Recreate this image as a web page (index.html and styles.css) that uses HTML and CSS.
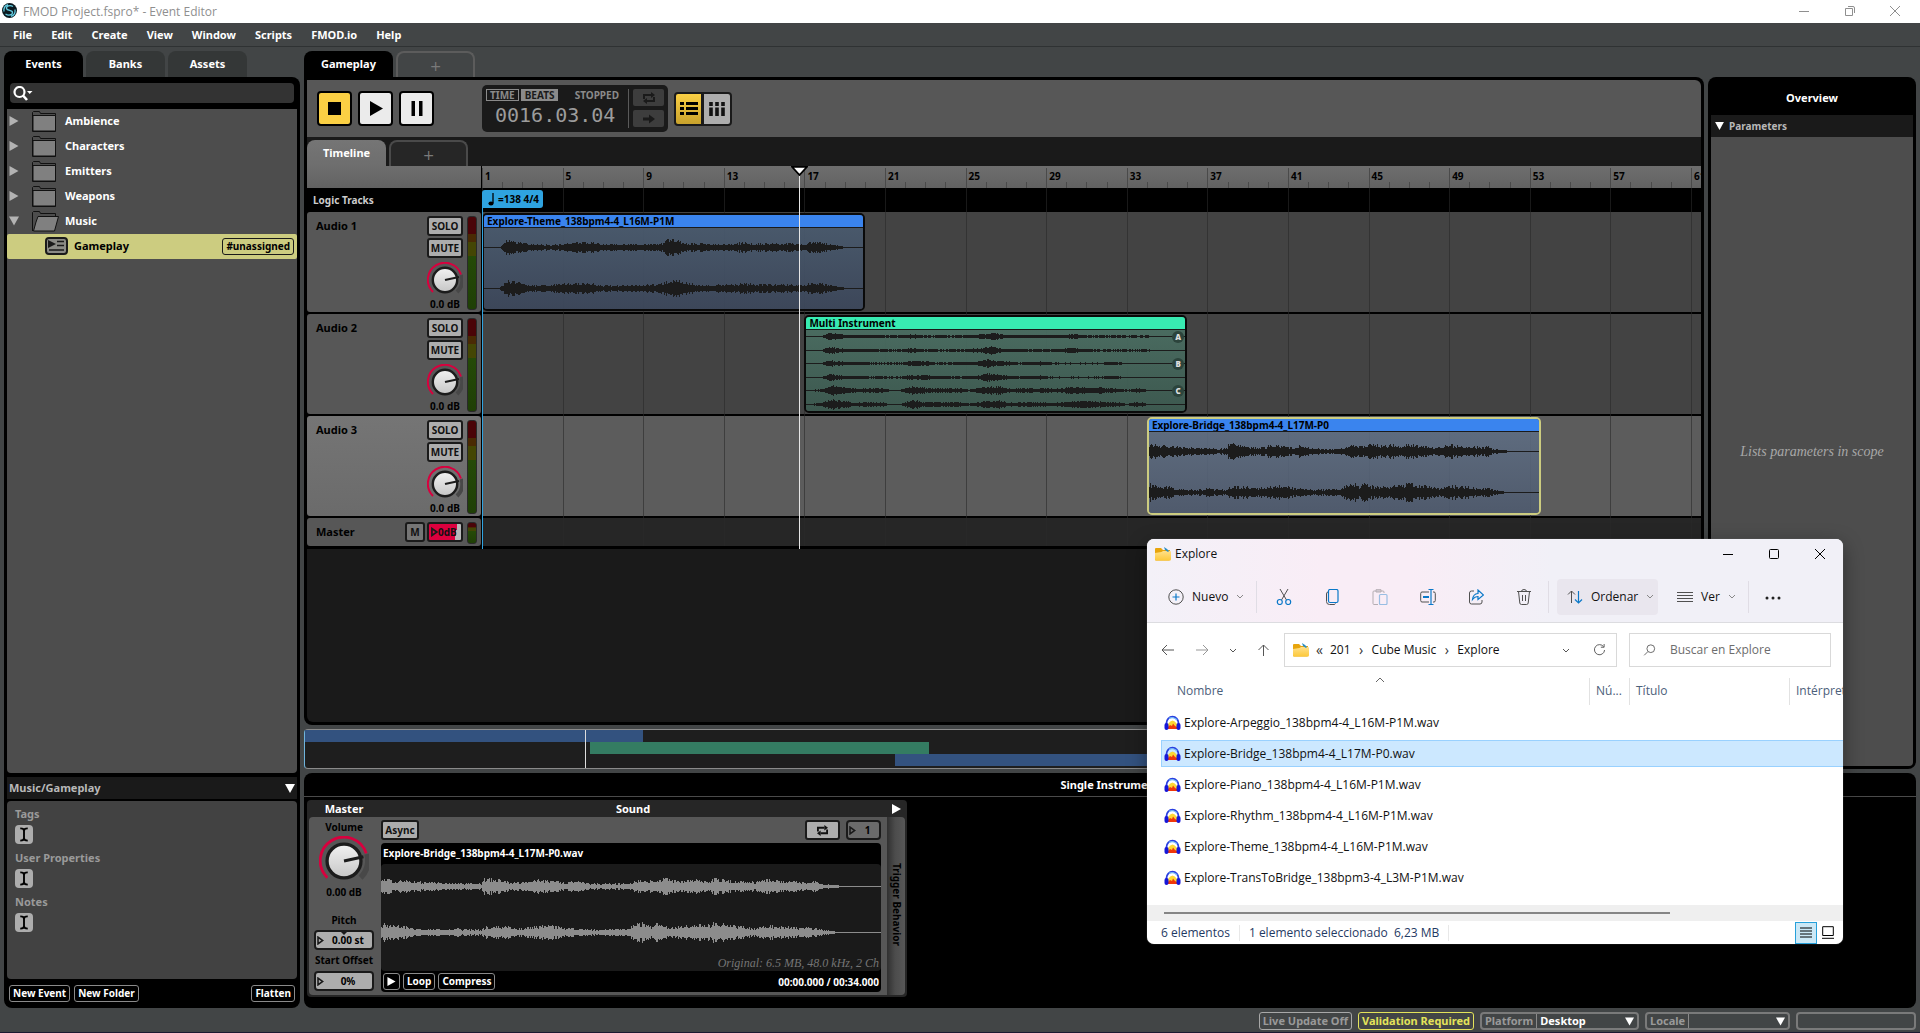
FILE: index.html
```html
<!DOCTYPE html>
<html lang="en" dir="ltr">
  <head>
    <meta charset="utf-8">
    <title>FMOD Project.fspro* - Event Editor</title>
    <link rel="stylesheet" href="styles.css">
  </head>

  <body>
    <!-- shared icons -->
    <svg class="defs" aria-hidden="true">
      <defs>
        <linearGradient id="knobFill" x1="0" y1="0" x2="0" y2="1">
          <stop offset="0" stop-color="#f2f2f2"/><stop offset="1" stop-color="#c6c6c6"/>
        </linearGradient>
        <linearGradient id="folderFill" x1="0" y1="0" x2="0" y2="1">
          <stop offset="0" stop-color="#ffe08a"/><stop offset="1" stop-color="#fdc93a"/>
        </linearGradient>
      </defs>
      <symbol id="knob" viewBox="-18 -18 36 36">
        <path d="M16.5-5A17 17 0 0 1 12 12" fill="none" stroke="#484848" stroke-width="4"/>
        <path d="M-12 12A17 17 0 1 1 16-5.5" fill="none" stroke="#d8003e" stroke-width="2"/>
        <circle r="12.2" fill="url(#knobFill)" stroke="#1c1c1c" stroke-width="2.4"/>
        <path d="M0 0L14-3" stroke="#1c1c1c" stroke-width="2.2"/>
      </symbol>
      <symbol id="folder" viewBox="0 0 24 21">
        <path d="M.5 20.5V1.5L1.5.5H7.5L8.5 2.5H23.5V20.5Z" fill="#4d4d4d" stroke="#111"/>
        <path d="M1 4.5H23.5V20H1Z" fill="#808080" stroke="#111"/>
      </symbol>
      <symbol id="folderOpen" viewBox="0 0 27 21">
        <path d="M.5 20V1.5L1.5.5H7.5L8.5 2.5H23.5V6" fill="#4d4d4d" stroke="#111"/>
        <path d="M6 5.5H26.5L22.5 20H1.5L4 11Z" fill="#808080" stroke="#111"/>
      </symbol>
      <symbol id="right" viewBox="0 0 9 10"><path d="M0 0L9 5L0 10Z" fill="currentColor"/></symbol>
      <symbol id="down" viewBox="0 0 10 9"><path d="M0 0H10L5 9Z" fill="currentColor"/></symbol>
      <symbol id="drag" viewBox="0 0 6 8"><path d="M.8 1V7L5 4Z" fill="none" stroke="#1a1a1a" stroke-width="1.4"/></symbol>
      <symbol id="loop" viewBox="0 0 14 12">
        <path d="M2 7V3H9M12 5V9H5" fill="none" stroke="currentColor" stroke-width="2"/>
        <path d="M9 0L13 3L9 6ZM5 6L1 9L5 12Z" fill="currentColor"/>
      </symbol>
      <symbol id="caret" viewBox="0 0 14 16"><path d="M3 1.5C5 1.5 7 2 7 4V12C7 14 5 14.500 3 14.500M11 1.5C9 1.500 7 2 7 4M7 12C7 14 9 14.500 11 14.500" fill="none" stroke="#000" stroke-width="2"/></symbol>
      <symbol id="winFolder" viewBox="0 0 16 14">
        <path d="M0 2Q0 1 1 1H6L8 3H15V12Q15 13.500 14 13.500H1Q0 13.500 0 12Z" fill="#e8a50c"/>
        <path d="M0 6L6.500 5L8 4H15Q16 4 16 5V12Q16 13.500 15 13.500H1Q0 13.500 0 12Z" fill="url(#folderFill)"/>
        <path d="M9 0L12 2L14 4L13 5L10 3Z" fill="#2a8ec4"/>
      </symbol>
      <symbol id="audacity" viewBox="0 0 17 17">
        <path d="M4 9Q8.500 2 13 9V14H4Z" fill="#fdd835"/>
        <path d="M4 12L6 10L8 11L9 8.500L11 11L13 12V14H4Z" fill="#f0370a"/>
        <path d="M2.500 10V8A6 6.300 0 0 1 14.500 8V10" fill="none" stroke="#2a3fe0" stroke-width="1.800"/>
        <path d="M5 3.300A6 5 0 0 1 13 5" fill="none" stroke="#6fb6f5" stroke-width="1.400"/>
        <rect x="0.500" y="8" width="4" height="7" rx="2" fill="#1616d8"/>
        <rect x="12.500" y="8" width="4" height="7" rx="2" fill="#1616d8"/>
      </symbol>
      <symbol id="chev" viewBox="0 0 8 5"><path d="M1 1L4 4L7 1" fill="none" stroke="currentColor"/></symbol>
    </svg>

    <header class="titlebar">
      <svg class="logo" viewBox="0 0 15 15"><circle cx="7.500" cy="7.500" r="7.500" fill="#0b1a20"/><path d="M11 3.500C8 1.500 4 3 4.500 5.500C5 8 10.500 7 10.500 9.500C10.500 12 6.500 13 3.500 11M2 8.500C1.500 5 3 2.500 6 1.600M13 6.500C13.500 10 12 12.500 9 13.400" fill="none" stroke="#63cbe0" stroke-width="1.300"/></svg>
      <span class="apptitle">FMOD Project.fspro* - Event Editor</span>
      <button class="winbtn" aria-label="Minimize"><svg viewBox="0 0 12 12"><path d="M1 6.500H11" /></svg></button>
      <button class="winbtn" aria-label="Restore"><svg viewBox="0 0 12 12"><path d="M1.500 3.500H8.500V10.500H1.500ZM4 1.500H9Q10.500 1.500 10.500 3V8"/></svg></button>
      <button class="winbtn" aria-label="Close"><svg viewBox="0 0 12 12"><path d="M1 1L11 11M11 1L1 11"/></svg></button>
    </header>

    <nav class="menubar">
      <a href="#">File</a><a href="#">Edit</a><a href="#">Create</a><a href="#">View</a><a href="#">Window</a><a href="#">Scripts</a><a href="#">FMOD.io</a><a href="#">Help</a>
    </nav>

    <main class="workspace">
      <section class="browser">
        <div class="tabs">
          <button class="tab active">Events</button>
          <button class="tab">Banks</button>
          <button class="tab">Assets</button>
        </div>
        <div class="browserpanel">
          <label class="search">
            <svg viewBox="0 0 20 15"><circle cx="6.500" cy="6" r="5" fill="none" stroke="#fff" stroke-width="2.200"/><path d="M10 9.500L14 14" stroke="#fff" stroke-width="2.600"/><path d="M14 5H19.500L16.700 8Z" fill="#fff"/></svg>
            <input type="text" aria-label="Search events">
          </label>
          <div class="tree">
            <div class="node"><svg class="arrow"><use href="#right"/></svg><svg class="folder"><use href="#folder"/></svg>Ambience</div>
            <div class="node"><svg class="arrow"><use href="#right"/></svg><svg class="folder"><use href="#folder"/></svg>Characters</div>
            <div class="node"><svg class="arrow"><use href="#right"/></svg><svg class="folder"><use href="#folder"/></svg>Emitters</div>
            <div class="node"><svg class="arrow"><use href="#right"/></svg><svg class="folder"><use href="#folder"/></svg>Weapons</div>
            <div class="node"><svg class="arrow"><use href="#down"/></svg><svg class="folder open"><use href="#folderOpen"/></svg>Music</div>
            <div class="node selected">
              <svg class="event" viewBox="0 0 23 18"><rect x="1" y="1" width="21" height="16" rx="3" fill="#8b8b86" stroke="#1a1a1a" stroke-width="2"/><path d="M3 3L11 7L3 11Z" fill="#1a1a1a"/><path d="M12 4.500H19M12 8.500H19M4 13H19" stroke="#1a1a1a" stroke-width="1.500"/></svg>
              Gameplay<span class="tag">#unassigned</span>
            </div>
          </div>
          <div class="pathbar"><span>Music/Gameplay</span><svg><use href="#down"/></svg></div>
          <div class="properties">
            <h3>Tags</h3>
            <button class="edit" aria-label="Edit tags"><svg><use href="#caret"/></svg></button>
            <h3>User Properties</h3>
            <button class="edit" aria-label="Edit user properties"><svg><use href="#caret"/></svg></button>
            <h3>Notes</h3>
            <button class="edit" aria-label="Edit notes"><svg><use href="#caret"/></svg></button>
          </div>
          <div class="browserbuttons">
            <button class="outline">New Event</button>
            <button class="outline">New Folder</button>
            <button class="outline last">Flatten</button>
          </div>
        </div>
      </section>

      <section class="right">
        <div class="upper">
          <div class="center">
            <div class="tabs">
              <button class="tab wide active">Gameplay</button>
              <button class="tab add">+</button>
            </div>
            <div class="editor">
              <div class="transport">
                <button class="play on" aria-label="Stop"><svg viewBox="0 0 31 31"><path d="M9 9H22V22H9Z"/></svg></button>
                <button class="play" aria-label="Play"><svg viewBox="0 0 31 31"><path d="M10 8L23 15.500L10 23Z"/></svg></button>
                <button class="play" aria-label="Pause"><svg viewBox="0 0 31 31"><path d="M10.500 8H14V23H10.500ZM18 8H21.500V23H18Z"/></svg></button>
                <div class="clock">
                  <div class="readout">
                    <div class="modes">
                      <button class="mode">TIME</button>
                      <button class="mode active">BEATS</button>
                      <span>STOPPED</span>
                    </div>
                    <div class="digits">0016.03.04</div>
                  </div>
                  <div class="clockbuttons">
                    <button aria-label="Loop"><svg viewBox="0 0 14 12"><use href="#loop"/></svg></button>
                    <button aria-label="Follow"><svg viewBox="0 0 14 12"><path d="M1 6H8" stroke="currentColor" stroke-width="3"/><path d="M7 1.500L13 6L7 10.500Z" fill="currentColor"/></svg></button>
                  </div>
                </div>
                <div class="views">
                  <button class="on" aria-label="Track view"><svg viewBox="0 0 18 14"><path d="M0 1.500H4M6 1.500H18M0 6.500H4M6 6.500H18M0 11.500H4M6 11.500H18" stroke="#000" stroke-width="3"/></svg></button>
                  <button aria-label="Mixer view"><svg viewBox="0 0 16 14"><path d="M2 0V4M2 5.500V14M8 0V4M8 5.500V14M14 0V4M14 5.500V14" stroke="#111" stroke-width="3.600"/></svg></button>
                </div>
              </div>
              <div class="sheetstrip">
                <button class="tab sheet">Timeline</button>
                <button class="tab add">+</button>
              </div>

              <div class="timeline">
                <div class="row ruler"><div class="head"></div><div class="lane" id="ruler"></div></div>
                <div class="row logic">
                  <div class="head">Logic Tracks</div>
                  <div class="lane"><div class="tempo"><svg viewBox="0 0 6 13"><path d="M5 0V10" stroke="#000" stroke-width="1.300"/><ellipse cx="3" cy="10.500" rx="2.600" ry="2"/></svg>=138 4/4</div></div>
                </div>
                <div class="row track">
                  <div class="head">
                    <span class="name">Audio 1</span>
                    <div class="controls">
                      <button class="small">SOLO</button><button class="small">MUTE</button>
                      <svg class="knob"><use href="#knob"/></svg><span>0.0 dB</span>
                    </div>
                    <div class="meter"></div>
                  </div>
                  <div class="lane">
                    <div class="clip single theme"><div class="cliptitle">Explore-Theme_138bpm4-4_L16M-P1M</div><div class="clipbody"><svg class="wave" data-wave="themeL"></svg><svg class="wave" data-wave="themeR"></svg></div></div>
                  </div>
                </div>
                <div class="row track">
                  <div class="head">
                    <span class="name">Audio 2</span>
                    <div class="controls">
                      <button class="small">SOLO</button><button class="small">MUTE</button>
                      <svg class="knob"><use href="#knob"/></svg><span>0.0 dB</span>
                    </div>
                    <div class="meter"></div>
                  </div>
                  <div class="lane">
                    <div class="clip multi">
                      <div class="cliptitle">Multi Instrument</div>
                      <div class="clipbody">
                        <div class="part"><svg class="wave" data-wave="partA"></svg><svg class="wave" data-wave="partA"></svg><b>A</b></div>
                        <div class="part"><svg class="wave" data-wave="partB"></svg><svg class="wave" data-wave="partB"></svg><b>B</b></div>
                        <div class="part"><svg class="wave" data-wave="partC"></svg><svg class="wave" data-wave="partC"></svg><b>C</b></div>
                      </div>
                    </div>
                  </div>
                </div>
                <div class="row track current">
                  <div class="head">
                    <span class="name">Audio 3</span>
                    <div class="controls">
                      <button class="small">SOLO</button><button class="small">MUTE</button>
                      <svg class="knob"><use href="#knob"/></svg><span>0.0 dB</span>
                    </div>
                    <div class="meter"></div>
                  </div>
                  <div class="lane">
                    <div class="clip single bridge"><div class="cliptitle">Explore-Bridge_138bpm4-4_L17M-P0</div><div class="clipbody"><svg class="wave" data-wave="bridgeL"></svg><svg class="wave" data-wave="bridgeR"></svg></div></div>
                  </div>
                </div>
                <div class="row master">
                  <div class="head">
                    <span class="name">Master</span>
                    <button class="small mono">M</button>
                    <button class="small level"><svg><use href="#drag"/></svg>0dB</button>
                    <div class="meter"></div>
                  </div>
                  <div class="lane"></div>
                </div>
                <div class="overlay" id="grid"></div>
                <div class="overlay top">
                  <div class="origin"></div>
                  <div class="playhead"><svg viewBox="0 0 17 10"><path d="M1 .8H16L8.500 9Z" fill="#fff" stroke="#000" stroke-width="1.800"/></svg></div>
                </div>
              </div>
            </div>
            <div class="minimap">
              <i class="m1"></i><i class="m2"></i><i class="m3"></i><i class="mhead"></i>
            </div>
          </div>

          <aside class="overview">
            <h2>Overview</h2>
            <h3><svg><use href="#down"/></svg>Parameters</h3>
            <div class="scope">Lists parameters in scope</div>
          </aside>
        </div>

        <div class="deck">
          <h2>Single Instrument</h2>
          <div class="instrument">
            <div class="modules">
              <div class="modhead"><span class="mhmaster">Master</span><span class="mhsound">Sound</span></div>
              <div class="modbody">
                <div class="mastercol">
                  <span class="vol">Volume</span>
                  <svg class="knob big"><use href="#knob"/></svg>
                  <span class="db">0.00 dB</span>
                  <label for="pitch">Pitch</label>
                  <div class="field"><svg><use href="#drag"/></svg><input id="pitch" type="text" value="0.00 st"><i></i></div>
                  <label for="offset">Start Offset</label>
                  <div class="field"><svg><use href="#drag"/></svg><input id="offset" type="text" value="0%"></div>
                </div>
                <div class="soundcol">
                  <div class="soundtop">
                    <button class="small async">Async</button>
                    <button class="small looper" aria-label="Loop instrument"><svg><use href="#loop"/></svg></button>
                    <div class="field count"><svg><use href="#drag"/></svg><input type="text" value="1" aria-label="Play count"></div>
                  </div>
                  <div class="sample">
                    <div class="samplename">Explore-Bridge_138bpm4-4_L17M-P0.wav</div>
                    <div class="sampleview">
                      <svg class="wave" data-wave="bridgeL"></svg>
                      <svg class="wave" data-wave="bridgeR"></svg>
                      <em>Original: 6.5 MB, 48.0 kHz, 2 Ch</em>
                    </div>
                    <div class="samplefoot">
                      <button class="outline" aria-label="Audition"><svg><use href="#right"/></svg></button>
                      <button class="outline">Loop</button>
                      <button class="outline">Compress</button>
                      <span>00:00.000 / 00:34.000</span>
                    </div>
                  </div>
                </div>
              </div>
            </div>
            <button class="trigger"><svg><use href="#right"/></svg><span>Trigger Behavior</span></button>
          </div>
        </div>
      </section>
    </main>

    <footer class="status">
      <button class="chip">Live Update Off</button>
      <button class="chip warn">Validation Required</button>
      <div class="pick platform"><label for="platform">Platform</label><select id="platform"><option>Desktop</option></select><svg><use href="#down"/></svg></div>
      <div class="pick locale"><label for="locale">Locale</label><select id="locale"><option></option></select><svg><use href="#down"/></svg></div>
      <div class="pick progress"></div>
    </footer>

    <!-- floating file explorer -->
    <section class="explorer">
      <div class="extop">
        <div class="extitle">
          <svg class="fold"><use href="#winFolder"/></svg><span>Explore</span>
          <button aria-label="Minimizar"><svg viewBox="0 0 12 12"><path d="M1 6.500H11"/></svg></button>
          <button aria-label="Maximizar"><svg viewBox="0 0 12 12"><rect x="1.500" y="1.500" width="9" height="9" rx="1"/></svg></button>
          <button aria-label="Cerrar"><svg viewBox="0 0 12 12"><path d="M1 1L11 11M11 1L1 11"/></svg></button>
        </div>
        <div class="extools">
          <button class="nuevo"><svg class="i16" viewBox="0 0 16 16"><circle cx="8" cy="8" r="7.200" class="g"/><path class="b" d="M8 4.500V11.500M4.500 8H11.500"/></svg>Nuevo<svg class="chev"><use href="#chev"/></svg></button>
          <span class="sep"></span>
          <button class="icon" aria-label="Cortar"><svg class="i16" viewBox="0 0 16 16"><path class="g" d="M4 0L10.500 11M12 0L5.500 11"/><circle class="b" cx="3.800" cy="13" r="2.500"/><circle class="b" cx="12.200" cy="13" r="2.500"/></svg></button>
          <button class="icon" aria-label="Copiar"><svg class="i16" viewBox="0 0 16 16"><path class="g" d="M4 3Q2.500 3 2.500 5V12.500Q2.500 15.500 5.500 15.500H10Q11 15.500 11.500 14.500"/><rect class="b" x="4.500" y=".5" width="9.500" height="13" rx="1.500"/></svg></button>
          <button class="icon off" aria-label="Pegar"><svg class="i16" viewBox="0 0 16 16"><path class="g" d="M6 15.500H2Q1 15.500 1 14.500V3Q1 2 2 2H11Q12 2 12 3V4M4 .7H9V3H4Z"/><rect class="b" x="7.500" y="5.500" width="7.500" height="10" rx="1"/></svg></button>
          <button class="icon" aria-label="Cambiar nombre"><svg class="i16" viewBox="0 0 16 16"><path class="g" d="M9 3H2Q.7 3 .7 4.500V11.500Q.7 13 2 13H9M13 3H14Q15.300 3 15.300 4.500V11.500Q15.300 13 14 13H13"/><path class="b" d="M8.500 .5H13.500M8.500 15.500H13.500M11 .5V15.500"/><path class="b thick" d="M3 8H9"/></svg></button>
          <button class="icon" aria-label="Compartir"><svg class="i16" viewBox="0 0 16 16"><path class="g" d="M6 2H3.500Q1.500 2 1.500 4V13Q1.500 15 3.500 15H12Q14 15 14 13V11"/><path class="b" d="M4.500 10.500Q5 5 10 4.500V1L15.500 6L10 10.500V7.500Q7 7.300 4.500 10.500Z"/></svg></button>
          <button class="icon" aria-label="Eliminar"><svg class="i16" viewBox="0 0 16 16"><path class="g" d="M1 2.500H15M5.500 2.500Q5.500 .5 8 .5Q10.500 .5 10.500 2.500M2.500 2.500L3.800 14Q4 15.500 5.500 15.500H10.500Q12 15.500 12.200 14L13.500 2.500M6.500 6V12M9.500 6V12"/></svg></button>
          <span class="sep"></span>
          <button class="ordenar"><svg class="i16" viewBox="0 0 16 16"><path class="g" d="M4.500 14V2M1 5.500L4.500 2L8 5.500"/><path class="b" d="M11.500 2V14M8 10.500L11.500 14L15 10.500"/></svg>Ordenar<svg class="chev"><use href="#chev"/></svg></button>
          <button class="ver"><svg class="i16" viewBox="0 0 16 16"><path class="g" d="M0 3.500H16M0 6.500H16M0 9.500H16M0 12.500H16"/></svg>Ver<svg class="chev"><use href="#chev"/></svg></button>
          <span class="sep"></span>
          <button class="more" aria-label="Ver más"><svg class="i16" viewBox="0 0 16 16"><circle cx="2" cy="9" r="1.500"/><circle cx="8" cy="9" r="1.500"/><circle cx="14" cy="9" r="1.500"/></svg></button>
        </div>
      </div>
      <div class="exnav">
        <button aria-label="Atrás"><svg viewBox="0 0 13 12"><path d="M13 6H1M6 1L1 6L6 11"/></svg></button>
        <button class="dim" aria-label="Adelante"><svg viewBox="0 0 13 12"><path d="M0 6H12M7 1L12 6L7 11"/></svg></button>
        <button class="tiny" aria-label="Recientes"><svg viewBox="0 0 8 5"><use href="#chev"/></svg></button>
        <button class="up" aria-label="Arriba"><svg viewBox="0 0 13 12"><path d="M6.500 12V1M1.500 6L6.500 1L11.500 6"/></svg></button>
        <div class="address">
          <svg class="fold"><use href="#winFolder"/></svg><span>«</span><a href="#">201</a><span>›</span><a href="#">Cube Music</a><span>›</span><a href="#">Explore</a>
          <button class="drop" aria-label="Ubicaciones"><svg viewBox="0 0 8 5"><use href="#chev"/></svg></button>
          <button class="refresh" aria-label="Actualizar"><svg viewBox="0 0 13 13"><path d="M11 3A5.500 5.500 0 1 0 12 6.500M11.500 0V3.500H8"/></svg></button>
        </div>
        <label class="exsearch"><svg viewBox="0 0 14 14"><circle cx="8.500" cy="5.500" r="4.500"/><path d="M5 9L.8 13.200"/></svg><input type="text" placeholder="Buscar en Explore" aria-label="Buscar en Explore"></label>
      </div>
      <div class="exlist">
        <table>
          <colgroup><col class="c1"><col class="c2"><col class="c3"><col class="c4"></colgroup>
          <thead><tr><th>Nombre<svg class="sort" viewBox="0 0 10 6"><path d="M1 5L5 1L9 5"/></svg></th><th>Nú...</th><th>Título</th><th>Intérprete</th></tr></thead>
          <tbody>
            <tr><td><svg><use href="#audacity"/></svg>Explore-Arpeggio_138bpm4-4_L16M-P1M.wav</td><td></td><td></td><td></td></tr>
            <tr class="picked"><td><svg><use href="#audacity"/></svg>Explore-Bridge_138bpm4-4_L17M-P0.wav</td><td></td><td></td><td></td></tr>
            <tr><td><svg><use href="#audacity"/></svg>Explore-Piano_138bpm4-4_L16M-P1M.wav</td><td></td><td></td><td></td></tr>
            <tr><td><svg><use href="#audacity"/></svg>Explore-Rhythm_138bpm4-4_L16M-P1M.wav</td><td></td><td></td><td></td></tr>
            <tr><td><svg><use href="#audacity"/></svg>Explore-Theme_138bpm4-4_L16M-P1M.wav</td><td></td><td></td><td></td></tr>
            <tr><td><svg><use href="#audacity"/></svg>Explore-TransToBridge_138bpm3-4_L3M-P1M.wav</td><td></td><td></td><td></td></tr>
          </tbody>
        </table>
      </div>
      <div class="exscroll"><i></i></div>
      <div class="exstatus">
        <span>6 elementos</span><span>1 elemento seleccionado&nbsp; 6,23 MB</span>
        <button class="on" aria-label="Detalles"><svg viewBox="0 0 12 13"><path d="M0 2H12M0 5H12M0 8H12M0 11H12"/></svg></button>
        <button aria-label="Iconos"><svg viewBox="0 0 12 13"><path d="M.7 .7H11.300V9.500H.7ZM0 12.300H12"/></svg></button>
      </div>
    </section>

    <script src="script.js"></script>
  </body>
</html>
```
FILE: styles.css
```css
*{
  box-sizing: border-box;
  padding: 0;
  margin: 0;
}

:root{
  --app: #424546;
  --dark: #1a1a1a;
  --panel: #4d4d4d;
  --module: #575757;
  --button: #adadad;
  --yellow: #fbd044;
  --select: #cccc80;
  --bar: calc(100% / 60.5);
}

body{
  display: flex;
  flex-direction: column;
  height: 100vh;
  overflow: hidden;
  background: var(--app);
  color: #fff;
  font: bold 11px/16px "Noto Sans", "Open Sans", sans-serif;
}

button, input, select{
  font: inherit;
  color: inherit;
  background: none;
  border: 0;
  outline: 0;
}

svg{
  display: block;
  flex: none;
}

a{
  color: inherit;
  text-decoration: none;
}

h2, h3{
  font-size: 11px;
}

.defs{
  position: absolute;
  width: 0;
  height: 0;
}

/* window title + menu */
.titlebar{
  display: flex;
  align-items: center;
  height: 23px;
  flex: none;
  padding: 0 14px 2px 2px;
  background: #fff;
  color: #8f8f8f;
  font: 12px/20px "Open Sans", sans-serif;
}

.logo{
  width: 15px;
  height: 15px;
  margin-right: 6px;
}

.apptitle{
  flex: 1;
  padding-top: 2px;
}

.winbtn{
  width: 46px;
  height: 20px;
}

.winbtn:last-child{
  width: 22px;
  margin-left: 11px;
}

.winbtn svg{
  width: 12px;
  height: 12px;
  margin: auto;
  fill: none;
  stroke: #8f8f8f;
}

.menubar{
  display: flex;
  gap: 19px;
  height: 24px;
  flex: none;
  padding: 4px 13px;
  border-bottom: 1px solid #2f3233;
}

.workspace{
  flex: 1;
  min-height: 0;
  display: grid;
  grid-template-columns: 296px 1fr;
  gap: 4px;
  padding: 4px 4px 0;
}

.browser, .right, .center{
  display: flex;
  flex-direction: column;
  min-width: 0;
  min-height: 0;
}

.tabs{
  display: flex;
  gap: 3px;
  height: 26px;
  flex: none;
}

.tab{
  width: 79px;
  height: 26px;
  border-radius: 8px 8px 0 0;
  background: #343737;
}

.tab.wide{
  width: 89px;
}

.tab.active{
  background: #000;
}

.tab.add{
  border: 2px solid #5c5c5c;
  border-bottom: 0;
  background: none;
  color: #7a7a7a;
  font: 14px/26px "DejaVu Sans", sans-serif;
}

/* events browser */
.browserpanel{
  flex: 1;
  min-height: 0;
  display: flex;
  flex-direction: column;
  padding: 6px 3px;
  background: #000;
  border-radius: 0 8px 8px 8px;
}

.search{
  display: flex;
  align-items: center;
  height: 20px;
  flex: none;
  margin: 0 3px 6px;
  padding-left: 3px;
  border-radius: 4px;
  background: #333;
}

.search svg{
  width: 20px;
  height: 15px;
}

.search input{
  flex: 1;
}

.tree{
  flex: 1;
  background: var(--panel);
  border-radius: 0 0 4px 4px;
}

.node{
  display: flex;
  align-items: center;
  height: 25px;
  padding: 0 3px 1px 2px;
}

.node .arrow{
  width: 10px;
  height: 10px;
  margin-right: 13px;
  color: #b3b3b3;
}

.folder{
  width: 24px;
  height: 21px;
  margin-right: 9px;
}

.folder.open{
  width: 27px;
  margin-right: 6px;
}

.node.selected{
  padding-left: 38px;
  background: var(--select);
  border-radius: 2px;
  color: #000;
}

.event{
  width: 23px;
  height: 18px;
  margin-right: 6px;
}

.tag{
  margin-left: auto;
  padding: 0 3px;
  border: 1px solid #1a1a1a;
  border-radius: 3px;
  font-size: 10px;
  line-height: 15px;
}

.pathbar{
  display: flex;
  align-items: center;
  justify-content: space-between;
  height: 22px;
  flex: none;
  margin: 4px 0 2px;
  padding: 0 2px;
  background: var(--dark);
  color: #b8b8b8;
}

.pathbar svg{
  width: 10px;
  height: 9px;
  color: #fff;
}

.properties{
  height: 178px;
  flex: none;
  padding: 5px 8px;
  border-radius: 4px;
  background: #424242;
}

.properties h3{
  color: #9a9a9a;
  line-height: 16px;
}

.edit{
  display: block;
  width: 18px;
  height: 19px;
  margin: 3px 0 6px;
  border-radius: 4px;
  background: var(--button);
}

.edit svg{
  width: 14px;
  height: 15px;
  margin: auto;
}

.browserbuttons{
  display: flex;
  gap: 4px;
  padding: 6px 2px 0;
}

.browserbuttons .last{
  margin-left: auto;
}

.outline{
  height: 17px;
  padding: 0 3px;
  border: 1px solid #8a8a8a;
  border-radius: 3px;
  font-size: 10px;
  line-height: 15px;
}

/* editor */
.upper{
  flex: 1;
  min-height: 0;
  display: flex;
  gap: 4px;
  margin-bottom: 4px;
}

.center{
  flex: 1;
}

.editor{
  flex: 1;
  min-height: 0;
  padding: 3px;
  background: #000;
  border-radius: 0 8px 8px 8px;
  display: flex;
  flex-direction: column;
}

.transport{
  display: flex;
  align-items: center;
  height: 57px;
  flex: none;
  padding: 0 10px;
  background: var(--module);
  border-radius: 0 6px 0 0;
}

.play{
  width: 35px;
  height: 35px;
  margin-right: 6px;
  border: 2px solid #000;
  border-radius: 4px;
  background: #ebebeb;
}

.play.on{
  background: var(--yellow);
}

.play svg{
  width: 31px;
  height: 31px;
}

.clock{
  display: flex;
  width: 186px;
  height: 47px;
  margin: 0 6px 0 42px;
  padding: 4px;
  border-radius: 5px;
  background: var(--dark);
}

.readout{
  flex: 1;
  border-right: 1px solid #5a5a5a;
}

.modes{
  display: flex;
  gap: 2px;
  color: #8a8a8a;
  font-size: 10px;
  line-height: 12px;
}

.modes span{
  margin-left: auto;
  padding-right: 9px;
}

.mode{
  height: 12px;
  padding: 0 3px;
  border: 1px solid #8a8a8a;
  line-height: 10px;
}

.mode.active{
  background: #8a8a8a;
  color: var(--dark);
}

.digits{
  padding-left: 9px;
  color: #9c9c9c;
  font: 20px/28px "DejaVu Sans Mono", monospace;
}

.clockbuttons{
  display: flex;
  flex-direction: column;
  gap: 4px;
  padding-left: 4px;
}

.clockbuttons button{
  width: 31px;
  height: 17px;
  border-radius: 2px;
  background: #3d3d3d;
  color: var(--dark);
}

.clockbuttons svg{
  width: 14px;
  height: 12px;
  margin: auto;
}

.views{
  display: flex;
}

.views button{
  width: 29px;
  height: 34px;
  border: 2px solid #1a1a1a;
  border-left-width: 1px;
  border-radius: 0 4px 4px 0;
  background: var(--button);
}

.views .on{
  border-left-width: 2px;
  border-radius: 4px 0 0 4px;
  background: linear-gradient(#fbd044, #c9a22c);
}

.views svg{
  width: 18px;
  height: 14px;
  margin: auto;
}

.sheetstrip{
  display: flex;
  gap: 3px;
  height: 29px;
  flex: none;
  padding-top: 3px;
  background: var(--dark);
}

.tab.sheet{
  background: linear-gradient(#757575, #6e6e6e);
}

.sheetstrip .add{
  background: #262626;
  border-color: #4a4a4a;
}

.timeline{
  position: relative;
  flex: 1;
  background: linear-gradient(#000, #000) 0 0 / 100% 383px no-repeat var(--dark);
  border-radius: 0 0 6px 6px;
}

.row{
  display: flex;
  height: 100px;
  margin-bottom: 2px;
}

.head{
  display: flex;
  width: 174px;
  flex: none;
  padding: 4px 4px 2px 9px;
  background: var(--module);
  border-radius: 3px;
  color: #000;
}

.lane{
  position: relative;
  flex: 1;
  margin-left: 1px;
  background: #434343;
}

.row.ruler{
  height: 22px;
  margin: 0;
}

.ruler .head, .ruler .lane{
  background: linear-gradient(#6e6e6e, #626262);
  border-radius: 0;
  overflow: hidden;
}

.ruler i{
  position: absolute;
  bottom: 0;
  width: 1px;
  height: 6px;
  background: #4a4a4a;
}

.ruler i.major{
  height: 20px;
}

.ruler span{
  position: absolute;
  top: 2px;
  padding-left: 3px;
  color: #000;
  font-size: 10px;
}

.row.logic{
  height: 24px;
  margin: 0;
}

.logic .head, .logic .lane{
  background: #000;
}

.logic .head{
  padding-left: 6px;
  color: #ccc;
  font-size: 10px;
}

.tempo{
  position: relative;
  z-index: 4;
  display: flex;
  gap: 4px;
  width: 61px;
  height: 18px;
  margin-top: 2px;
  padding: 0 0 0 6px;
  background: #2fa3e0;
  border-radius: 3px 3px 3px 0;
  color: #000;
  font-size: 10px;
  line-height: 18px;
}

.tempo svg{
  width: 6px;
  height: 13px;
  margin-top: 3px;
}

.name{
  flex: 1;
  line-height: 20px;
}

.controls{
  width: 36px;
  display: flex;
  flex-direction: column;
  gap: 2px;
  font-size: 10px;
  line-height: 12px;
  text-align: center;
  white-space: nowrap;
}

.small{
  height: 20px;
  border: 2px solid #1a1a1a;
  border-radius: 3px;
  background: var(--button);
  color: #111;
  font-size: 10px;
  line-height: 16px;
}

.knob{
  width: 36px;
  height: 36px;
  margin: 2px 0 -2px;
}

.meter{
  width: 10px;
  margin-left: 4px;
  border: 1px solid #2a2a2a;
  border-radius: 3px;
  background: linear-gradient(#4a0408 19%, #4a2a04 19% 27%, #444604 27% 42%, #254a08 42%, #1f3f06);
}

.current .head{
  background: linear-gradient(#757575, #6b6b6b);
}

.current .lane{
  background: #5c5c5c;
}

.row.master{
  height: 28px;
  margin: 0;
}

.master .lane{
  background: #262626;
}

.mono{
  width: 20px;
  margin-right: 2px;
  background: #757575;
}

.level{
  display: flex;
  align-items: center;
  width: 36px;
  padding-left: 2px;
  background: linear-gradient(100deg, #dc003e 82%, #b8b8b8 82%);
  white-space: nowrap;
}

.level svg{
  width: 7px;
  height: 10px;
}

.clip{
  position: absolute;
  z-index: 2;
  top: 1px;
  bottom: 1px;
  display: flex;
  flex-direction: column;
  border: 2px solid #0a0a0a;
  border-radius: 5px;
  overflow: hidden;
}

.cliptitle{
  height: 12px;
  flex: none;
  padding-left: 3px;
  background: #3a84ee;
  color: #000;
  font-size: 10px;
  line-height: 12px;
  white-space: nowrap;
}

.clipbody{
  flex: 1;
  min-height: 0;
  display: flex;
  flex-direction: column;
  border-top: 1px solid #1a1a1a;
  background: linear-gradient(rgba(73, 90, 110, .92), rgba(60, 71, 91, .92));
}

.wave{
  width: 100%;
  height: 0;
  flex: 1;
  min-height: 0;
  fill: #1c1c1c;
}

.theme{
  left: 0;
  width: calc(var(--bar) * 19);
}

.multi{
  left: calc(var(--bar) * 16);
  width: calc(var(--bar) * 19);
}

.multi .cliptitle{
  background: #38ebb2;
}

.multi .clipbody{
  background: linear-gradient(rgba(74, 110, 98, .92), rgba(60, 90, 80, .92));
}

.part{
  position: relative;
  flex: 1;
  min-height: 0;
  display: flex;
  flex-direction: column;
}

.part b{
  position: absolute;
  top: 1px;
  right: 1px;
  width: 12px;
  height: 12px;
  border-radius: 6px;
  background: #2c443c;
  color: #ddd;
  font-size: 8px;
  line-height: 12px;
  text-align: center;
}

.bridge{
  left: calc(var(--bar) * 33);
  width: calc(var(--bar) * 19.55);
  border-color: var(--select);
}

.bridge .clipbody{
  background: linear-gradient(rgba(94, 109, 130, .9), rgba(78, 90, 110, .9));
}

.overlay{
  position: absolute;
  z-index: 1;
  top: 22px;
  left: 175px;
  right: 0;
  height: 358px;
  pointer-events: none;
}

.overlay i{
  position: absolute;
  top: 0;
  bottom: 0;
  width: 1px;
  background: rgba(42, 42, 42, .6);
}

.overlay.top{
  z-index: 3;
  top: 0;
  height: 383px;
}

.origin{
  position: absolute;
  top: 40px;
  bottom: 0;
  width: 1px;
  background: #2fa3e0;
}

.playhead{
  position: absolute;
  left: calc(var(--bar) * 15.75);
  top: 0;
  bottom: 0;
  width: 1px;
  background: #e6e6e6;
}

.playhead svg{
  width: 17px;
  height: 10px;
  margin-left: -8px;
}

.minimap{
  position: relative;
  height: 40px;
  flex: none;
  margin-top: 4px;
  border: 1px solid #8a8a8a;
  border-left-color: #6fb4dc;
  border-radius: 4px;
  background: #1e1e1e;
}

.minimap i{
  position: absolute;
  height: 12px;
  background: #33527f;
}

.minimap .m1{
  left: 0;
  top: 0;
  width: 24.2%;
}

.minimap .m2{
  left: 20.4%;
  top: 12px;
  width: 24.2%;
  background: #347c62;
}

.minimap .m3{
  left: 42.2%;
  top: 24px;
  width: 25%;
}

.minimap .mhead{
  left: 20%;
  top: 0;
  width: 1px;
  height: 38px;
  background: #ddd;
}

.overview{
  width: 208px;
  margin-top: 26px;
  padding: 0 3px 3px;
  display: flex;
  flex-direction: column;
  background: #000;
  border-radius: 8px;
}

.overview h2{
  padding-top: 4px;
  line-height: 34px;
  text-align: center;
}

.overview h3{
  display: flex;
  align-items: center;
  gap: 5px;
  height: 22px;
  padding-left: 4px;
  background: var(--dark);
  color: #b8b8b8;
  font-size: 10px;
}

.overview h3 svg{
  width: 9px;
  height: 8px;
  color: #fff;
}

.scope{
  flex: 1;
  display: flex;
  align-items: center;
  justify-content: center;
  background: var(--panel);
  border-radius: 0 0 4px 4px;
  color: #a8a8a8;
  font: italic 14px "Liberation Serif", serif;
}

/* deck */
.deck{
  height: 235px;
  flex: none;
  background: #000;
  border-radius: 8px;
}

.deck h2{
  height: 24px;
  margin-bottom: 3px;
  border-bottom: 1px solid #4a4a4a;
  line-height: 24px;
  text-align: center;
}

.instrument{
  display: flex;
  width: 600px;
  height: 197px;
  margin-left: 3px;
  border-radius: 4px;
  background: #262626;
  overflow: hidden;
}

.modules{
  width: 580px;
  padding: 0 0 2px 2px;
}

.modhead{
  display: flex;
  line-height: 17px;
  text-align: center;
}

.mhmaster{
  width: 70px;
}

.mhsound{
  flex: 1;
}

.modbody{
  display: flex;
  gap: 7px;
  height: 178px;
  padding: 1px 6px 3px 5px;
  border-radius: 4px 0 0 4px;
  background: var(--module);
  color: #000;
}

.mastercol{
  width: 60px;
  display: flex;
  flex-direction: column;
  align-items: center;
  font-size: 10px;
  line-height: 20px;
  white-space: nowrap;
}

.vol{
  line-height: 18px;
}

.knob.big{
  width: 50px;
  height: 50px;
  margin: 0;
}

.db{
  margin-bottom: 12px;
  line-height: 12px;
}

.mastercol label:last-of-type{
  line-height: 21px;
}

.field{
  position: relative;
  display: flex;
  align-items: center;
  width: 60px;
  height: 20px;
  flex: none;
  border: 2px solid #1a1a1a;
  border-radius: 4px;
  background: var(--button);
}

.field svg{
  width: 7px;
  height: 9px;
  margin-left: 1px;
}

.field input{
  width: 100%;
  min-width: 0;
  font-size: 10px;
  text-align: center;
}

.field i{
  position: absolute;
  top: 0;
  left: 25px;
  border: 3px solid transparent;
  border-top-color: #1a1a1a;
}

.field.count{
  width: 35px;
  background: #6b6b6b;
}

.soundcol{
  flex: 1;
  min-width: 0;
  display: flex;
  flex-direction: column;
  gap: 3px;
  padding-top: 2px;
}

.soundtop{
  display: flex;
  gap: 6px;
}

.async{
  width: 38px;
  margin-right: auto;
}

.looper{
  width: 35px;
}

.looper svg{
  width: 13px;
  height: 11px;
  margin: auto;
}

.sample{
  flex: 1;
  min-height: 0;
  display: flex;
  flex-direction: column;
  border-radius: 4px;
  background: #000;
  color: #fff;
  font-size: 10px;
}

.samplename{
  padding-left: 2px;
  line-height: 21px;
}

.sampleview{
  position: relative;
  flex: 1;
  min-height: 0;
  display: flex;
  flex-direction: column;
  padding-bottom: 15px;
  border-radius: 4px;
  background: var(--dark);
}

.sampleview .wave{
  fill: #8c8c8c;
}

.sampleview em{
  position: absolute;
  right: 2px;
  bottom: 0;
  color: #757575;
  font: italic 12px/15px "Liberation Serif", serif;
}

.samplefoot{
  display: flex;
  align-items: center;
  gap: 3px;
  height: 21px;
  flex: none;
  padding: 0 2px;
}

.samplefoot svg{
  width: 9px;
  height: 9px;
}

.samplefoot span{
  margin-left: auto;
}

.trigger{
  width: 20px;
  padding: 4px 2px 2px 0;
  display: flex;
  flex-direction: column;
  align-items: center;
}

.trigger svg{
  width: 9px;
  height: 10px;
}

.trigger span{
  flex: 1;
  width: 18px;
  margin-top: 3px;
  padding-top: 46px;
  border-radius: 0 4px 4px 0;
  background: linear-gradient(90deg, #303030, #4c4c4c 45%, #575757);
  color: #000;
  font-size: 10px;
  line-height: 16px;
  text-align: left;
  writing-mode: vertical-rl;
}

/* status bar */
.status{
  display: flex;
  justify-content: flex-end;
  gap: 6px;
  height: 25px;
  flex: none;
  padding: 4px 4px 3px;
  border-bottom: 1px solid #1b1830;
  color: #999;
}

.chip{
  height: 18px;
  padding: 0 3px;
  border: 1px solid #a8a8a8;
  border-radius: 3px;
  line-height: 16px;
}

.chip.warn{
  color: #e3e35a;
  border-color: #e3e35a;
}

.pick{
  display: flex;
  align-items: center;
  height: 18px;
  border: 2px solid #7a7a7a;
  border-radius: 4px;
}

.pick label{
  padding: 0 3px;
  border-right: 1px solid #8a8a8a;
  line-height: 14px;
}

.pick select{
  flex: 1;
  min-width: 0;
  padding-left: 3px;
  color: #fff;
  line-height: 14px;
  appearance: none;
}

.pick svg{
  width: 9px;
  height: 9px;
  margin-right: 3px;
  color: #fff;
}

.platform{
  width: 159px;
}

.locale{
  width: 145px;
}

.progress{
  width: 120px;
}

/* file explorer window */
.explorer{
  position: absolute;
  z-index: 10;
  top: 539px;
  right: 77px;
  width: 696px;
  display: flex;
  flex-direction: column;
  border-radius: 7px;
  background: #fff;
  box-shadow: 0 0 1px #888, 0 6px 20px rgba(0, 0, 0, .4);
  color: #111;
  font: 12px/16px "Open Sans", sans-serif;
  overflow: hidden;
}

.extop{
  border-bottom: 1px solid #dcdce0;
  background: linear-gradient(90deg, #f3f1f8, #f9edf6 25%, #f9edf6 38%, #f1f0f7 58%);
}

.extitle{
  display: flex;
  align-items: center;
  height: 30px;
  padding: 0 0 0 8px;
}

.extitle span{
  flex: 1;
  margin-left: 4px;
}

.extitle button{
  width: 46px;
  height: 28px;
}

.extitle button svg{
  width: 12px;
  height: 12px;
  margin: auto;
  fill: none;
  stroke: #000;
}

.fold{
  width: 16px;
  height: 14px;
}

.extools{
  display: flex;
  align-items: center;
  height: 53px;
  padding: 2px 0 0 21px;
}

.extools button{
  display: flex;
  align-items: center;
  height: 36px;
  flex: none;
}

.i16{
  width: 16px;
  height: 16px;
  fill: none;
}

.i16 .g{
  stroke: #505050;
}

.i16 .b{
  stroke: #0a78c8;
  stroke-width: 1.2;
}

.i16 .thick{
  stroke-width: 2;
}

.off{
  opacity: .4;
}

.chev{
  width: 8px;
  height: 5px;
  margin-left: auto;
  color: #888;
}

.sep{
  width: 1px;
  height: 32px;
  background: #e0dde5;
}

.nuevo{
  width: 72px;
  gap: 8px;
  margin-right: 16px;
}

.extools .icon{
  width: 48px;
  justify-content: center;
}

.nuevo + .sep{
  margin-right: 3px;
}

.icon + .sep{
  margin-right: 8px;
}

.ordenar{
  width: 101px;
  gap: 8px;
  padding: 0 8px 0 10px;
  border-radius: 4px;
  background: #e9e6ee;
}

.ver{
  width: 55px;
  gap: 8px;
  margin: 0 16px 0 19px;
}

.ver + .sep{
  margin-right: 16px;
}

.more svg{
  fill: #222;
}

.exnav{
  display: flex;
  align-items: center;
  padding: 10px 12px 7px 14px;
  color: #555;
}

.exnav svg{
  width: 13px;
  height: 12px;
  fill: none;
  stroke: #555;
}

.exnav > button{
  width: 13px;
  margin-right: 22px;
}

.exnav > .dim{
  margin-right: 20px;
  opacity: .6;
}

.exnav > .tiny{
  width: 8px;
  margin-right: 20px;
}

.exnav > .up{
  margin-right: 14px;
}

.exnav .tiny svg, .exnav .drop svg{
  width: 8px;
  height: 5px;
}

.address, .exsearch{
  display: flex;
  align-items: center;
  height: 34px;
  border: 1px solid #d9d9d9;
}

.address{
  flex: 1;
  padding: 0 10px 0 8px;
  color: #111;
}

.address .fold{
  width: 16px;
  height: 14px;
  stroke: none;
}

.address span{
  width: 21px;
  color: #333;
  font-size: 14px;
  text-align: center;
}

.drop{
  margin-left: auto;
  margin-right: 23px;
  color: #555;
}

.exsearch{
  width: 202px;
  margin-left: 12px;
  padding-left: 13px;
}

.exsearch input{
  width: 160px;
  padding-left: 14px;
}

.exsearch input::placeholder{
  color: #6d6d6d;
}

.exlist{
  height: 231px;
  padding-left: 14px;
  overflow: hidden;
}

.exlist table{
  width: 740px;
  table-layout: fixed;
  border-spacing: 0 4px;
}

.c1{
  width: 428px;
}

.c2{
  width: 40px;
}

.c3{
  width: 160px;
}

.exlist th{
  position: relative;
  height: 27px;
  padding: 0 0 2px 6px;
  border-left: 1px solid #e2e2e2;
  color: #4c607a;
  font-weight: normal;
  text-align: left;
}

.exlist th:first-child{
  padding-left: 16px;
  border: 0;
}

.sort{
  position: absolute;
  top: -1px;
  left: 214px;
  width: 10px;
  height: 6px;
  fill: none;
  stroke: #666;
}

.exlist td{
  height: 27px;
  padding-top: 1px;
  border: solid transparent;
  border-width: 1px 0;
  white-space: nowrap;
}

.exlist td:first-child{
  border-left-width: 1px;
}

.exlist td svg{
  float: left;
  width: 17px;
  height: 17px;
  margin: 0 3px 0 2px;
}

.exlist .picked td{
  background: #cce8ff;
  border-color: #99d1ff;
}

.exscroll{
  height: 16px;
  padding: 7px 173px 0 17px;
  background: #efefef;
}

.exscroll i{
  display: block;
  height: 2px;
  background: #858585;
}

.exstatus{
  display: flex;
  align-items: center;
  height: 23px;
  padding: 0 4px 0 14px;
  color: #1f3a63;
}

.exstatus span{
  padding-right: 9px;
  margin-right: 9px;
  border-right: 1px solid #e8e8e8;
}

.exstatus button{
  width: 22px;
  height: 22px;
  border: 1px solid transparent;
}

.exstatus .on{
  margin-left: auto;
  border-color: #26a0da;
  background: #cbe8f6;
}

.exstatus svg{
  width: 12px;
  height: 13px;
  margin: auto;
  fill: none;
  stroke: #000;
}
```
FILE: script.js
```js
// loudness envelopes: [position 0..1, half height in px]
var waves = {
  themeL: [[0,0],[.04,0],[.05,3],[.06,7],[.09,6],[.12,3.5],[.16,2.5],[.21,3],[.24,5],[.29,5],[.31,3],[.38,3],[.45,3],[.47,4],[.48,9],[.5,8],[.54,4],[.6,3],[.66,3],[.68,5],[.71,3.5],[.78,4],[.84,3],[.86,5],[.89,5],[.91,3],[.94,1],[.96,0],[1,0]],
  themeR: [[0,0],[.04,0],[.05,4],[.06,7],[.09,6],[.12,3],[.16,2.5],[.21,5],[.28,5],[.31,3],[.38,2.5],[.45,4],[.47,5],[.48,7],[.51,8],[.55,4],[.6,3],[.66,4],[.68,5],[.71,4],[.78,4],[.84,3],[.86,5],[.89,5],[.91,3],[.94,1],[.97,0],[1,0]],
  bridgeL: [[0,8],[.02,6],[.06,5],[.1,4],[.13,3],[.2,2.5],[.204,8],[.24,6],[.26,4],[.3,4],[.31,7],[.35,5],[.37,3],[.38,6],[.4,4],[.42,2.5],[.5,2.5],[.51,6],[.55,5],[.57,8],[.6,5],[.63,7],[.65,4],[.665,8],[.7,5],[.75,4],[.77,7],[.8,5],[.86,4],[.87,5],[.88,2],[.91,1],[.925,0],[1,0]],
  bridgeR: [[0,9],[.02,6],[.05,6],[.07,3],[.14,2.5],[.15,5],[.16,3],[.2,2.5],[.21,6],[.25,6],[.27,4],[.3,5],[.33,7],[.38,4],[.42,2.5],[.49,3],[.51,9],[.53,9],[.54,5],[.55,9],[.58,5],[.63,7],[.67,9],[.72,6],[.75,4],[.77,7],[.82,5],[.87,4],[.885,2],[.92,0],[1,0]],
  partA: [[0,0],[.04,0],[.06,3.5],[.1,1.5],[.17,1],[.25,.8],[.27,2],[.31,.7],[.42,.8],[.46,2],[.49,3.5],[.53,1],[.66,.8],[.7,2.3],[.75,.7],[.9,.8],[.92,0],[1,0]],
  partB: [[0,0],[.04,0],[.06,3],[.1,1.5],[.16,.8],[.25,.6],[.27,2],[.32,1.8],[.34,.8],[.44,1],[.48,3.8],[.52,2],[.56,.8],[.62,1.5],[.65,.5],[.78,.5],[.8,1.6],[.83,.5],[.9,0],[1,0]],
  partC: [[0,0],[.04,1],[.07,5],[.1,3],[.13,1.5],[.2,2],[.22,.3],[.25,.5],[.28,4],[.32,2],[.4,2],[.43,.5],[.47,3],[.51,4],[.53,1.5],[.6,2],[.66,1.5],[.7,3],[.77,3],[.81,2],[.85,.5],[.88,2.5],[.9,0],[1,0]]
};

function level(points, pos){
  for (let i = 1; i < points.length; i++) {
    if (pos <= points[i][0]) {
      let a = points[i - 1];
      let b = points[i];
      return a[1] + (b[1] - a[1]) * (pos - a[0]) / (b[0] - a[0]);
    }
  }
  return 0;
}

function drawWave(svg, seed){
  let points = waves[svg.dataset.wave];
  let box = svg.getBoundingClientRect();
  let width = Math.round(box.width);
  let mid = Math.round(box.height / 2) - 1;
  let d = "";
  for (let x = 0; x < width; x++) {
    seed = (seed * 16807) % 2147483647;
    let amp = level(points, x / width);
    let h = Math.round(amp * (0.5 + 0.6 * (seed / 2147483647)));
    d += "M" + x + " " + (mid - h) + "h1v" + (h * 2 + 1) + "h-1z";
  }
  svg.innerHTML = '<path shape-rendering="crispEdges" d="' + d + '"/>';
}

function drawBars(){
  let ruler = document.getElementById("ruler");
  let grid = document.getElementById("grid");
  for (let bar = 0; bar < 61; bar++) {
    let left = "left:" + (bar / 60.5 * 100) + "%";
    if (bar % 4 == 0) {
      ruler.innerHTML += '<i class="major" style="' + left + '"></i><span style="' + left + '">' + (bar + 1) + '</span>';
      grid.innerHTML += '<i style="' + left + '"></i>';
    } else {
      ruler.innerHTML += '<i style="' + left + '"></i>';
    }
  }
}

drawBars();
document.querySelectorAll(".wave").forEach((svg, i) => drawWave(svg, 4321 + i * 977));
```
